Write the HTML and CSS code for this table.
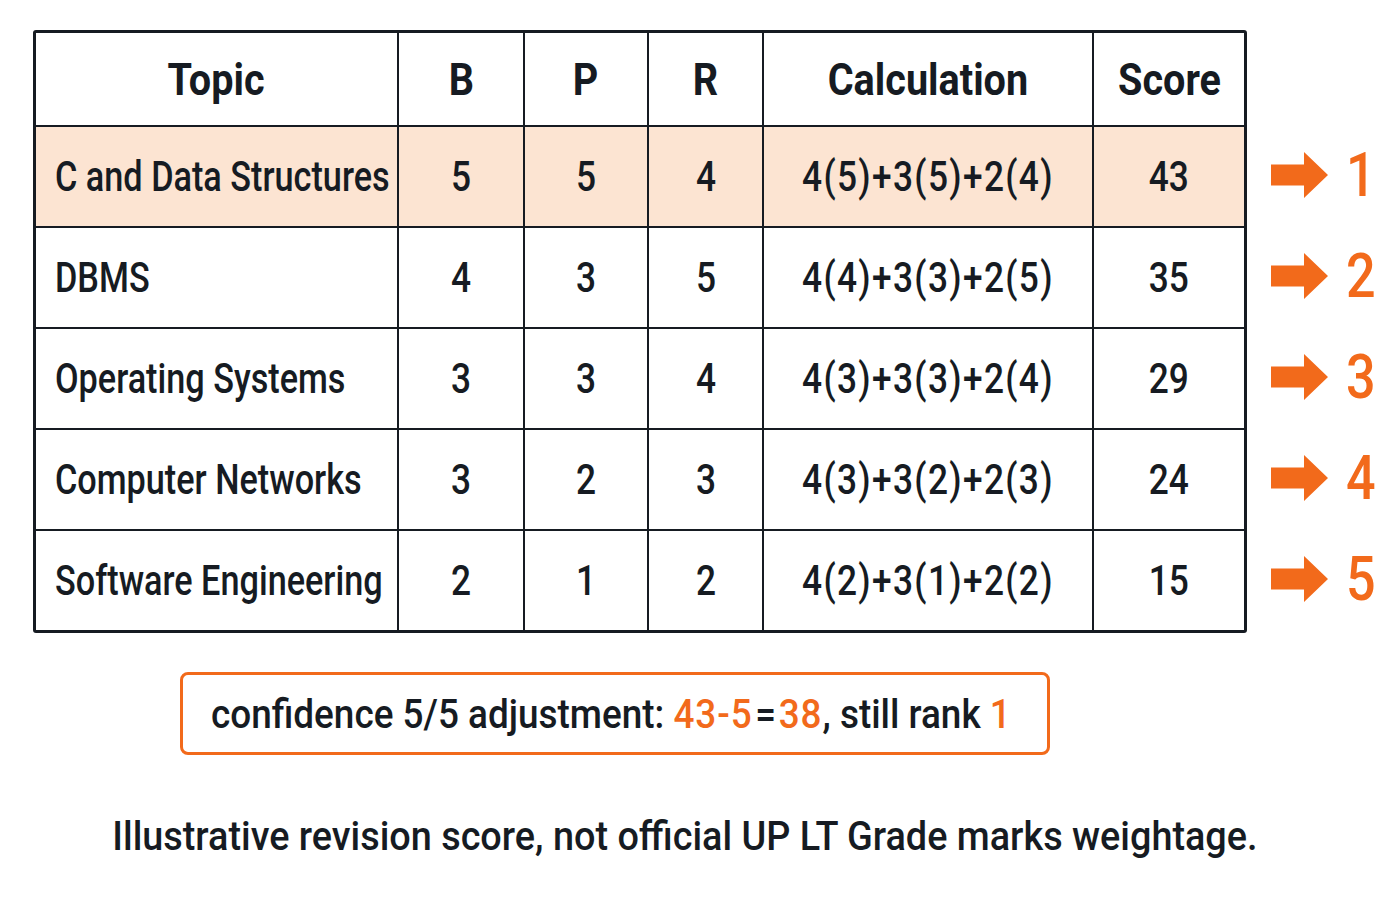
FILE: index.html
```html
<!DOCTYPE html>
<html>
<head>
<meta charset="utf-8">
<link rel="stylesheet" href="styles.css">
</head>
<body>
<main class="page">
  <div class="board">
    <table class="scores">
      <colgroup>
        <col class="c-topic"><col class="c-b"><col class="c-p"><col class="c-r"><col class="c-calc"><col class="c-score">
      </colgroup>
      <thead>
        <tr><th><span class="sx">Topic</span></th><th><span class="sx">B</span></th><th><span class="sx">P</span></th><th><span class="sx">R</span></th><th><span class="sx">Calculation</span></th><th><span class="sx">Score</span></th></tr>
      </thead>
      <tbody>
        <tr class="top"><td class="topic"><span class="sx">C and Data Structures</span></td><td><span class="sx">5</span></td><td><span class="sx">5</span></td><td><span class="sx">4</span></td><td class="calc"><span class="sx">4(5)+3(5)+2(4)</span></td><td><span class="sx">43</span></td></tr>
        <tr><td class="topic"><span class="sx">DBMS</span></td><td><span class="sx">4</span></td><td><span class="sx">3</span></td><td><span class="sx">5</span></td><td class="calc"><span class="sx">4(4)+3(3)+2(5)</span></td><td><span class="sx">35</span></td></tr>
        <tr><td class="topic"><span class="sx">Operating Systems</span></td><td><span class="sx">3</span></td><td><span class="sx">3</span></td><td><span class="sx">4</span></td><td class="calc"><span class="sx">4(3)+3(3)+2(4)</span></td><td><span class="sx">29</span></td></tr>
        <tr><td class="topic"><span class="sx">Computer Networks</span></td><td><span class="sx">3</span></td><td><span class="sx">2</span></td><td><span class="sx">3</span></td><td class="calc"><span class="sx">4(3)+3(2)+2(3)</span></td><td><span class="sx">24</span></td></tr>
        <tr><td class="topic"><span class="sx">Software Engineering</span></td><td><span class="sx">2</span></td><td><span class="sx">1</span></td><td><span class="sx">2</span></td><td class="calc"><span class="sx">4(2)+3(1)+2(2)</span></td><td><span class="sx">15</span></td></tr>
      </tbody>
    </table>
    <ol class="ranks">
      <li><svg class="arrow" viewBox="0 0 57 46"><path d="M0 12.5H33V0L57 23L33 46V33.5H0Z"/></svg><span class="sx">1</span></li>
      <li><svg class="arrow" viewBox="0 0 57 46"><path d="M0 12.5H33V0L57 23L33 46V33.5H0Z"/></svg><span class="sx">2</span></li>
      <li><svg class="arrow" viewBox="0 0 57 46"><path d="M0 12.5H33V0L57 23L33 46V33.5H0Z"/></svg><span class="sx">3</span></li>
      <li><svg class="arrow" viewBox="0 0 57 46"><path d="M0 12.5H33V0L57 23L33 46V33.5H0Z"/></svg><span class="sx">4</span></li>
      <li><svg class="arrow" viewBox="0 0 57 46"><path d="M0 12.5H33V0L57 23L33 46V33.5H0Z"/></svg><span class="sx">5</span></li>
    </ol>
  </div>
  <div class="note"><span class="sx">confidence 5/5 adjustment: <span class="hl">43-5</span><span class="eq">=</span><span class="hl">38</span>, still rank <span class="hl">1</span></span></div>
  <p class="footer"><span class="sx">Illustrative revision score, not official UP LT Grade marks weightage.</span></p>
</main>
</body>
</html>
```
FILE: styles.css
```css
html, body {
  margin: 0;
  padding: 0;
  background: #ffffff;
}
body {
  font-family: "Roboto", "Liberation Sans", sans-serif;
  font-weight: 500;
  color: #161b22;
}
.sx {
  display: inline-block;
  white-space: pre;
  transform: scaleX(0.84);
  transform-origin: center;
}
.page {
  width: 1400px;
  height: 900px;
  box-sizing: border-box;
  padding: 30px 0 0 33px;
  display: flex;
  flex-direction: column;
}
.board {
  display: flex;
  align-items: flex-start;
}
.scores {
  border-collapse: separate;
  border-spacing: 0;
  border: 3px solid #161b22;
  border-radius: 3px;
  table-layout: fixed;
  width: 1211px;
  font-size: 42px;
}
.c-topic { width: 363px; }
.c-b { width: 126px; }
.c-p { width: 124px; }
.c-r { width: 115px; }
.c-calc { width: 330px; }
.c-score { width: 150px; }
.scores th, .scores td {
  text-align: center;
  padding: 0;
  border-right: 2px solid #161b22;
  border-bottom: 2px solid #161b22;
  font-weight: 500;
  white-space: nowrap;
  overflow: visible;
}
.scores th:last-child, .scores td:last-child { border-right: none; }
.scores tbody tr:last-child td { border-bottom: none; }
.scores th {
  height: 92px;
  font-weight: 700;
  font-size: 45px;
}
.scores th .sx { transform: scaleX(0.88); }
.scores td { height: 99px; }
.scores td.topic { text-align: left; padding-left: 19px; }
.scores td.topic .sx { transform: scaleX(0.815); transform-origin: left center; }
.scores td.calc .sx { letter-spacing: 1.6px; }
.scores tr.top td { background: #fce4d2; }
.ranks {
  list-style: none;
  margin: 94px 0 0 24px;
  padding: 0;
  display: flex;
  flex-direction: column;
}
.ranks li {
  height: 101px;
  display: flex;
  align-items: center;
  gap: 18px;
  color: #f26a1b;
  font-size: 62px;
  line-height: 1;
}
.ranks li .sx { transform-origin: left center; }
.arrow { width: 57px; height: 46px; fill: #f26a1b; flex: none; }
.note {
  align-self: flex-start;
  margin: 39px 0 0 147px;
  width: 870px;
  height: 83px;
  box-sizing: border-box;
  border: 3px solid #f26a1b;
  border-radius: 8px;
  padding-left: 28px;
  display: flex;
  align-items: center;
  font-size: 41px;
}
.note .sx { transform: scaleX(0.9); transform-origin: left center; }
.note .hl { letter-spacing: 1px; }
.note .eq { margin: 0 3px; }
.hl { color: #f26a1b; }
.footer {
  margin: 58px 0 0 -33px;
  width: 1370px;
  text-align: center;
  font-size: 40px;
  line-height: 1.2;
}
.footer .sx { transform: scaleX(0.945); }
```
